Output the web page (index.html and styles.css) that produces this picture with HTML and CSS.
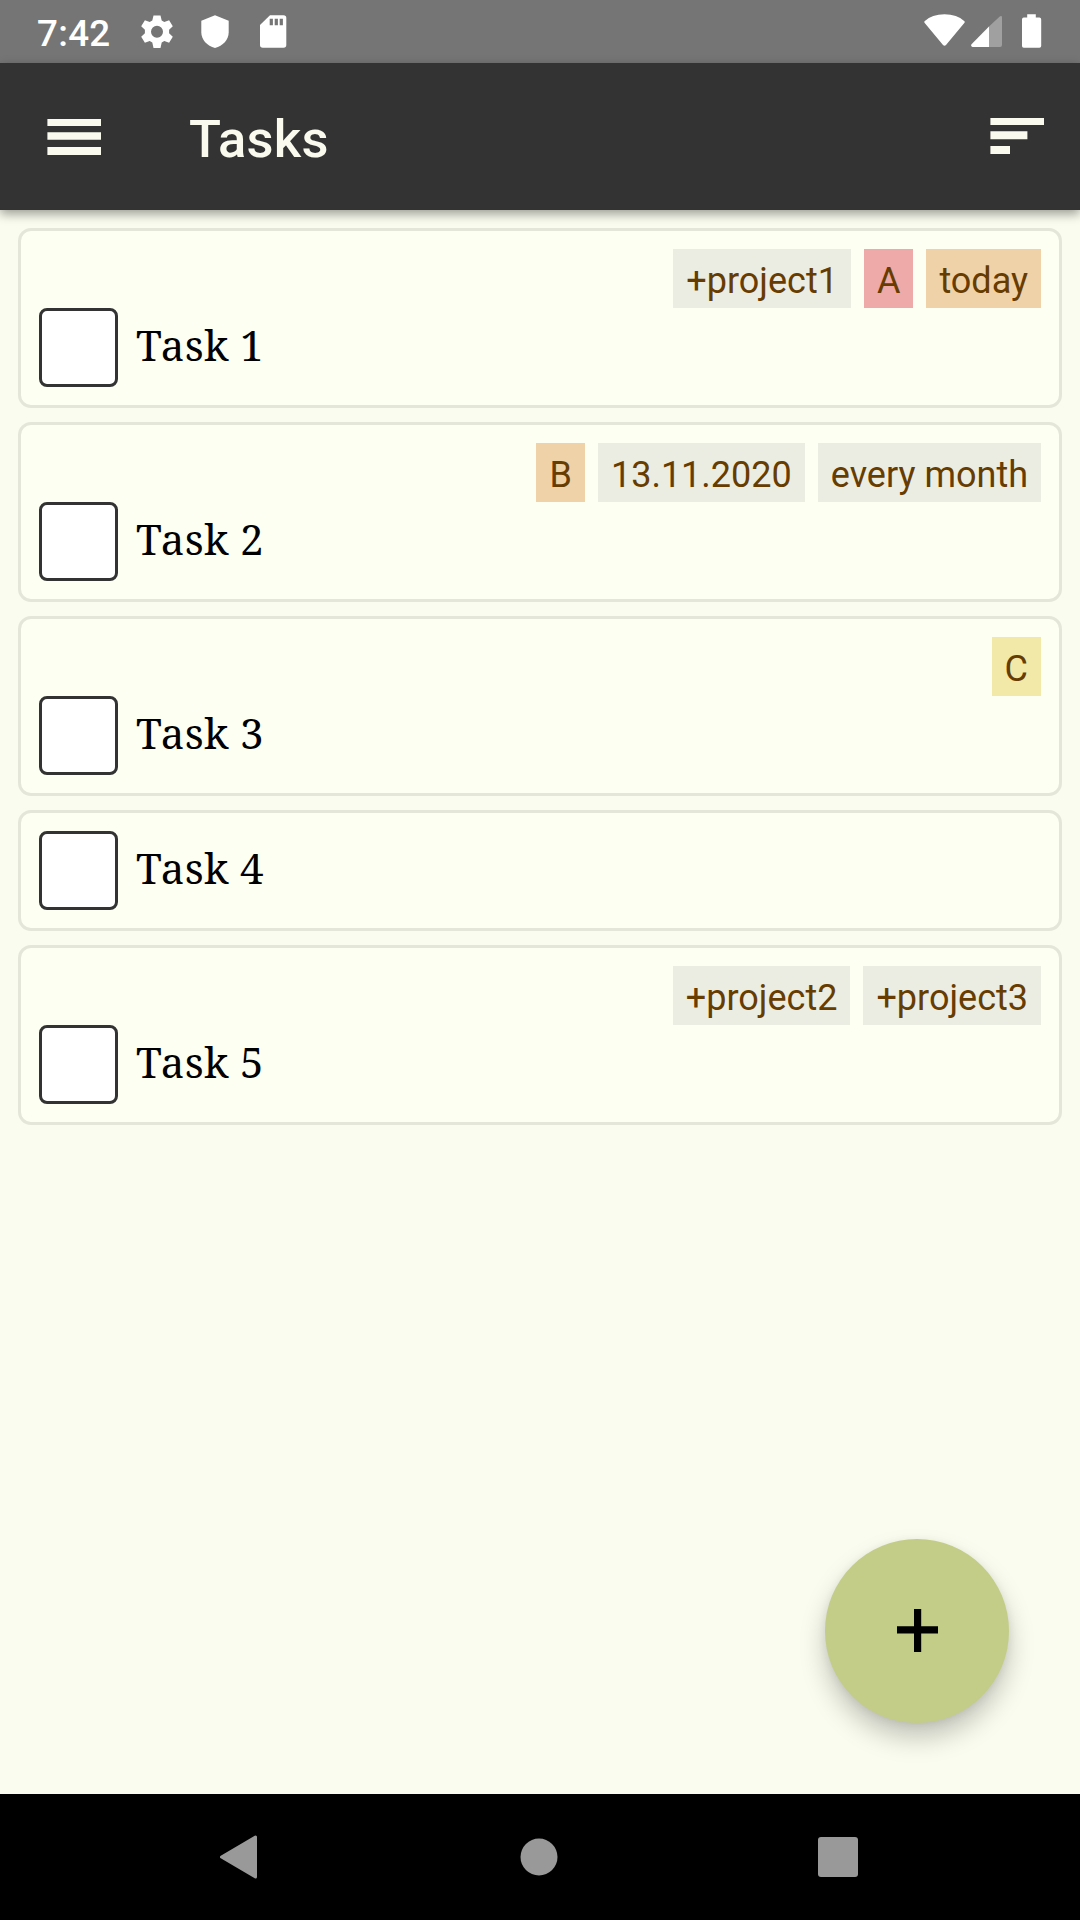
FILE: index.html
```html
<!DOCTYPE html>
<html lang="en">
<head>
<meta charset="utf-8">
<title>Tasks</title>
<link rel="stylesheet" href="styles.css">
</head>
<body>
<div class="screen">
  <header class="status">
    <span class="clock">7:42</span>
    <svg class="status-left" width="160" height="63" viewBox="130 0 160 63">
      <path fill="#fff" fill-rule="evenodd" d="M153.500 15.500h7l1.200 5 2.600 1.500 4.800-1.700 3.700 6-3.700 3.500v3.400l3.700 3.500-3.700 6-4.800-1.600-2.600 1.500-1.200 5.400h-7l-1.200-5.400-2.600-1.500-4.800 1.600-3.700-6 3.700-3.500v-3.400l-3.700-3.500 3.700-6 4.800 1.700 2.600-1.500zM157 25.700a6 6 0 1 0 0 12 6 6 0 1 0 0-12z"/>
      <path fill="#fff" d="M215 15.300l13.700 5.400v11.600c0 7.500-5.800 13.700-13.700 15.700-7.900-2-13.700-8.200-13.700-15.700V20.700z"/>
      <path fill="#fff" d="M270 15.200h13.500a2.800 2.800 0 0 1 2.800 2.800v27a2.800 2.800 0 0 1-2.800 2.800h-20.700a2.800 2.800 0 0 1-2.800-2.800V25z"/>
      <path fill="#757575" d="M269.700 18.700h3.200v6.500h-3.200zM274.700 18.700h3.200v6.500h-3.200zM279.700 18.700h3.200v6.500h-3.200z"/>
    </svg>
    <svg class="status-right" width="160" height="63" viewBox="920 0 160 63">
      <path fill="#fff" d="M924.500 21.200Q932 14.300 944.500 14.300T964.500 21.200q.5.800 0 1.600L946 45q-1.500 1.500-3 0L924.500 22.800q-.5-.8 0-1.600z"/>
      <path fill="#a0a0a0" d="M989 26.500L1000 16.300q2-1 2 1V45q0 2-2 2h-11z"/>
      <path fill="#fff" d="M989 26.500V47h-16.500q-2.200-1-1-2.800z"/>
      <path fill="#fff" d="M1027.200 14.200h8.600v3.400h3.600q1.800 0 1.800 1.800v26.500q0 1.800-1.800 1.800h-15.600q-1.800 0-1.800-1.800V19.400q0-1.800 1.800-1.800h3.400z"/>
    </svg>
  </header>
  <div class="appbar">
    <svg class="menu" width="54" height="37" viewBox="0 0 54 37" fill="#fafbee"><path d="M.4 0H54v7H.4zM.4 13.300H54v7.500H.4zM.4 28H54v8H.4z"/></svg>
    <h1>Tasks</h1>
    <svg class="sort" width="54" height="37" viewBox="0 0 54 37" fill="#fafbee"><path d="M.4 0H54v7H.4zM.4 13.300h37v8H.4zM.4 28H20v8H.4z"/></svg>
  </div>
  <main class="list">
    <article class="card">
      <div class="chips"><span class="chip">+project1</span><span class="chip red">A</span><span class="chip orange">today</span></div>
      <div class="task"><span class="box"></span><span class="name">Task 1</span></div>
    </article>
    <article class="card">
      <div class="chips"><span class="chip orange">B</span><span class="chip">13.11.2020</span><span class="chip">every month</span></div>
      <div class="task"><span class="box"></span><span class="name">Task 2</span></div>
    </article>
    <article class="card">
      <div class="chips"><span class="chip yellow">C</span></div>
      <div class="task"><span class="box"></span><span class="name">Task 3</span></div>
    </article>
    <article class="card">
      <div class="task"><span class="box"></span><span class="name">Task 4</span></div>
    </article>
    <article class="card">
      <div class="chips"><span class="chip">+project2</span><span class="chip">+project3</span></div>
      <div class="task"><span class="box"></span><span class="name">Task 5</span></div>
    </article>
  </main>
  <button class="fab" aria-label="Add task"><svg width="184" height="184" viewBox="825 1539 184 184"><path d="M914 1609h7.200v17.200H938v7.300h-16.800V1652H914v-18.500h-17v-7.300h17z"/></svg></button>
  <nav class="nav">
    <svg width="38" height="44" viewBox="0 0 38 44"><path d="M35.500 2v40L1.500 22z"/></svg>
    <svg class="home" width="38" height="38" viewBox="0 0 38 38"><circle cx="19" cy="19" r="18.500"/></svg>
    <svg width="40" height="40" viewBox="0 0 40 40"><rect width="40" height="40" rx="3"/></svg>
  </nav>
</div>
</body>
</html>
```
FILE: styles.css
```css
* { box-sizing: border-box; }
body { margin: 0; font-family: Roboto, sans-serif; }
.screen {
  position: relative;
  display: flex;
  flex-direction: column;
  width: 1080px;
  height: 1920px;
  overflow: hidden;
  background: #fafcef;
}
.status {
  display: flex;
  height: 63px;
  background: #757575;
  color: #fff;
}
.clock {
  width: 130px;
  padding-left: 37px;
  font-size: 36.75px;
  font-weight: 500;
  line-height: 67px;
  letter-spacing: .3px;
}
.status-right { margin-left: auto; }
.appbar {
  display: flex;
  align-items: center;
  height: 147px;
  padding: 2px 36px 0 47px;
  background: #333;
  color: #fafbee;
  box-shadow: 0 4px 10px rgba(0, 0, 0, .38);
  z-index: 1;
}
.appbar h1 {
  margin: 0 auto 0 88px;
  padding-top: 2px;
  font-size: 52.5px;
  font-weight: 500;
  line-height: 62px;
  letter-spacing: .3px;
}
.sort { margin-bottom: 2px; }
.list {
  flex: 1;
  display: flex;
  flex-direction: column;
  gap: 14px;
  padding: 18px;
}
.card {
  padding: 18px;
  border: 3px solid #e4e6da;
  border-radius: 13px;
  background: #fefff3;
}
.chips {
  display: flex;
  justify-content: flex-end;
  gap: 13px;
}
.chip {
  height: 59px;
  padding: 0 13px;
  background: #ecede2;
  color: #663c00;
  font-size: 36px;
  line-height: 65px;
}
.red { background: #eeaaa8; }
.orange { background: #f0d2a8; }
.yellow { background: #f2e9a8; }
.task { display: flex; }
.box {
  width: 79px;
  height: 79px;
  border: 3px solid #333;
  border-radius: 8px;
  background: #fff;
}
.name {
  padding-left: 18px;
  color: #000;
  font-family: "Noto Serif", "DejaVu Serif Condensed", "DejaVu Serif", serif;
  font-size: 42px;
  line-height: 74px;
  letter-spacing: .3px;
}
.fab {
  position: absolute;
  left: 825px;
  top: 1539px;
  width: 184px;
  height: 184px;
  padding: 0;
  border: 0;
  border-radius: 50%;
  background: #c3cd87;
  box-shadow: 0 15px 26px rgba(0, 0, 0, .22), 0 2px 8px rgba(0, 0, 0, .07);
}
.fab svg { display: block; }
.nav {
  display: flex;
  align-items: center;
  justify-content: space-between;
  height: 126px;
  padding: 0 222px 0 220px;
  background: #000;
}
.home { margin: 0 0 1px 2px; }
.nav path, .nav circle, .nav rect { fill: #999; }
.nav path { stroke: #999; stroke-width: 3; stroke-linejoin: round; }
```
